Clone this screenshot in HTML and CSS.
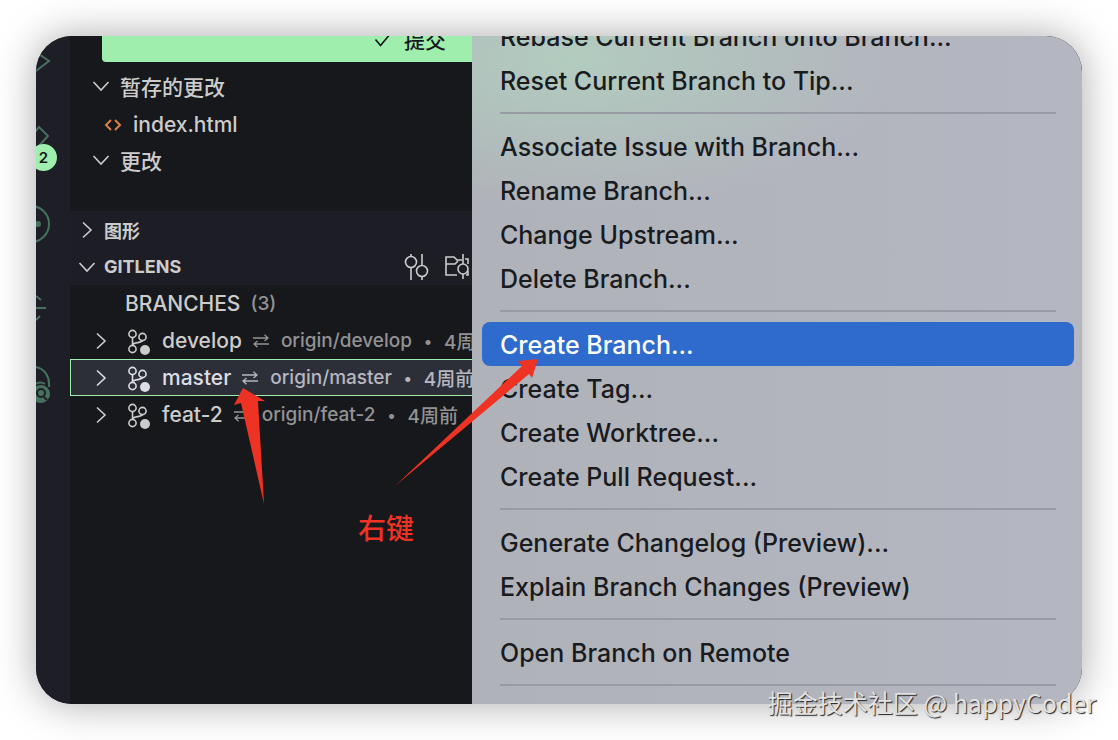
FILE: index.html
```html
<!doctype html>
<html lang="zh-CN">
<head>
  <meta charset="utf-8">
  <title>GitLens</title>
  <meta name="viewport" content="width=device-width, initial-scale=1">
  <link rel="stylesheet" href="styles.css">
</head>
<body>
  <svg class="symbols" aria-hidden="true">
    <symbol id="chevron-right" viewBox="0 0 18 18"><path d="M5 1.5l8 7.5-8 7.5"/></symbol>
    <symbol id="chevron-down" viewBox="0 0 18 18"><path d="M1.5 5L9 13l7.500-8"/></symbol>
    <symbol id="branch" viewBox="0 0 24 26">
      <circle cx="5.500" cy="5" r="3.600"/>
      <circle cx="5.500" cy="20" r="3.600"/>
      <circle cx="15.500" cy="8" r="3.600"/>
      <path d="M5.500 8.600v7.800M15.500 11.600c-1 3-9 1-10 4.500"/>
      <circle class="dot" cx="18" cy="21" r="5"/>
    </symbol>
    <symbol id="sync" viewBox="0 0 18 14"><path d="M1 4h15M12.500 .8L16 4l-3.500 3M17 10H2M5.500 7L2 10l3.500 3.200"/></symbol>
  </svg>

  <div class="window">
    <nav class="activity-bar">
      <button class="activity" aria-label="Run">
        <svg viewBox="0 0 34 83"><path d="M0 34l13 9L0 53"/></svg>
      </button>
      <button class="activity" aria-label="Source control">
        <svg viewBox="0 0 34 83"><path d="M-4 35l7-9 9 9-12 13"/></svg>
        <span class="badge">2</span>
      </button>
      <button class="activity" aria-label="GitLens">
        <svg viewBox="0 0 34 83"><circle cx="-5" cy="40" r="18"/><circle class="dot" cx="2" cy="40" r="3"/></svg>
      </button>
      <button class="activity" aria-label="Graph">
        <svg viewBox="0 0 34 83"><path d="M0 29l5 4M0 41h10M0 53l4-4"/></svg>
      </button>
      <button class="activity" aria-label="Inspect">
        <svg viewBox="0 0 34 83">
          <path d="M0 17c9 2 14 10 13 20M0 34c3-2 6-2 9 0"/>
          <circle class="dot" cx="5" cy="44" r="9"/>
          <path class="lens" d="M8 47l3 3M9 43a4 4 0 1 1-8 0 4 4 0 0 1 8 0z"/>
        </svg>
      </button>
    </nav>

    <aside class="sidebar">
      <div class="changes">
        <button class="commit">
          <svg viewBox="0 0 18 18"><path d="M1.500 9.500l5 6L17 3"/></svg>
          提交
        </button>
        <button class="row group"><svg class="chevron"><use href="#chevron-down"/></svg>暂存的更改</button>
        <button class="row file">
          <svg viewBox="0 0 18 14"><path d="M7 2L2 7l5 5M11 2l5 5-5 5"/></svg>
          index.html
        </button>
        <button class="row group"><svg class="chevron"><use href="#chevron-down"/></svg>更改</button>
      </div>

      <button class="row section"><svg class="chevron"><use href="#chevron-right"/></svg>图形</button>
      <div class="section-head">
        <button class="row section"><svg class="chevron"><use href="#chevron-down"/></svg>GITLENS</button>
        <button class="tool" aria-label="Commits">
          <svg viewBox="0 0 26 28"><path d="M7 1v2M7 15v12M18 1v11M18 24v3"/><circle cx="7" cy="9" r="5.500"/><circle cx="18" cy="18" r="5.500"/></svg>
        </button>
        <button class="tool" aria-label="Repositories">
          <svg viewBox="0 0 26 28"><path d="M13 22H2V4h8l3 3h5M2 11h9l3-3M19 1v10M19 21v5M21 6h3v5M24 18v4h-2"/><circle cx="19" cy="16" r="5"/></svg>
        </button>
      </div>

      <div class="branches">
        <div class="row branches-title">BRANCHES <span class="muted">(3)</span></div>
        <button class="row branch">
          <svg class="chevron"><use href="#chevron-right"/></svg>
          <svg class="branch-icon"><use href="#branch"/></svg>
          <span class="name">develop</span>
          <span class="muted"><svg class="sync"><use href="#sync"/></svg>origin/develop<i>•</i>4周前</span>
        </button>
        <button class="row branch selected">
          <svg class="chevron"><use href="#chevron-right"/></svg>
          <svg class="branch-icon"><use href="#branch"/></svg>
          <span class="name">master</span>
          <span class="muted"><svg class="sync"><use href="#sync"/></svg>origin/master<i>•</i>4周前</span>
        </button>
        <button class="row branch">
          <svg class="chevron"><use href="#chevron-right"/></svg>
          <svg class="branch-icon"><use href="#branch"/></svg>
          <span class="name">feat-2</span>
          <span class="muted"><svg class="sync"><use href="#sync"/></svg>origin/feat-2<i>•</i>4周前</span>
        </button>
      </div>
    </aside>

    <div class="menu" role="menu">
      <button role="menuitem">Rebase Current Branch onto Branch...</button>
      <button role="menuitem">Reset Current Branch to Tip...</button>
      <hr>
      <button role="menuitem">Associate Issue with Branch...</button>
      <button role="menuitem">Rename Branch...</button>
      <button role="menuitem">Change Upstream...</button>
      <button role="menuitem">Delete Branch...</button>
      <hr>
      <button role="menuitem" class="active">Create Branch...</button>
      <button role="menuitem">Create Tag...</button>
      <button role="menuitem">Create Worktree...</button>
      <button role="menuitem">Create Pull Request...</button>
      <hr>
      <button role="menuitem">Generate Changelog (Preview)...</button>
      <button role="menuitem">Explain Branch Changes (Preview)</button>
      <hr>
      <button role="menuitem">Open Branch on Remote</button>
      <hr>
    </div>

    <!-- annotations over the window -->
    <svg class="arrows" viewBox="0 0 320 160" aria-hidden="true">
      <path d="M13 33L4 50l7-2 23 101L28 46l7 0z"/>
      <path d="M308 4l-20 2 4 5L165 131l134-112 3 4z"/>
    </svg>
    <span class="note">右键</span>
  </div>

  <div class="watermark">掘金技术社区 @ happyCoder</div>
</body>
</html>
```

FILE: styles.css
```css
* {
  box-sizing: border-box;
}
body {
  margin: 0;
  height: 100vh;
  padding: 36px;
  overflow: hidden;
  background: #fff;
  color: #ccc;
  font-family: Inter, "Noto Sans CJK SC", sans-serif;
  font-size: 21px;
  font-weight: 500;
}
button {
  margin: 0;
  padding: 0;
  border: 0;
  background: none;
  color: inherit;
  font: inherit;
  text-align: left;
  white-space: nowrap;
}
svg {
  flex: none;
  fill: none;
  stroke: currentColor;
  stroke-width: 1.6;
}
.symbols {
  position: absolute;
  width: 0;
  height: 0;
}
.dot {
  fill: currentColor;
  stroke: none;
}

.window {
  position: relative;
  display: flex;
  height: 100%;
  overflow: hidden;
  border-radius: 36px;
  background: #17181b;
  box-shadow: 0 0 40px rgba(0, 0, 0, 0.34);
}

/* activity bar */
.activity-bar {
  flex: 0 0 34px;
  margin-top: -18px;
  background: #1e1e27;
  color: #47705f;
}
.activity {
  position: relative;
  display: block;
  width: 100%;
  height: 83px;
}
.activity svg {
  display: block;
  width: 34px;
  height: 83px;
  stroke-width: 2;
}
.activity .lens {
  stroke: #1e1e27;
}
.badge {
  position: absolute;
  top: 43px;
  left: -6px;
  width: 27px;
  height: 27px;
  border-radius: 50%;
  background: #9feeae;
  color: #17181b;
  font-size: 15px;
  font-weight: 600;
  line-height: 27px;
  text-align: center;
}

/* sidebar */
.sidebar {
  flex: 0 0 402px;
  overflow: hidden;
  background: #1d1e25;
}
.row {
  display: flex;
  align-items: center;
  width: 100%;
  height: 37px;
}
.chevron {
  width: 18px;
  height: 18px;
}
.changes {
  display: flow-root;
  height: 175px;
  background: #17181b;
}
.commit {
  display: flex;
  align-items: center;
  justify-content: center;
  gap: 12px;
  width: calc(100% - 32px);
  height: 42px;
  margin: -16px 0 7px 32px;
  padding: 0 0 4px 246px;
  border-radius: 4px 0 0 4px;
  background: #9feeae;
  color: #17181b;
}
.commit svg {
  width: 18px;
  height: 18px;
}
.group {
  gap: 10px;
  padding: 0 0 4px 22px;
}
.file {
  gap: 11px;
  padding-left: 34px;
}
.file svg {
  width: 18px;
  height: 14px;
  color: #d9804f;
  stroke-width: 2;
}
.section {
  gap: 8px;
  padding-left: 8px;
  font-size: 18px;
  font-weight: 700;
}
.section-head {
  display: flex;
  align-items: center;
}
.tool {
  flex: none;
  height: 28px;
  margin-right: 14px;
}
.tool:last-child {
  margin-right: 2px;
}
.tool svg {
  display: block;
  width: 26px;
  height: 28px;
}

.branches {
  height: 100%;
  background: #17181b;
}
.branches-title {
  gap: 10px;
  padding-left: 55px;
}
.branch {
  padding-left: 22px;
}
.branch-icon {
  width: 24px;
  height: 26px;
  margin: 2px 11px 0 17px;
}
.muted {
  display: flex;
  align-items: center;
  color: #929295;
  font-size: 19px;
}
.muted i {
  width: 32px;
  font-style: normal;
  font-size: 16px;
  text-align: center;
}
.sync {
  width: 18px;
  height: 14px;
  margin: 0 11px 0 10px;
  stroke-width: 1.3;
}
.selected {
  border: solid #9feeae;
  border-width: 1px 0 1px 1px;
  padding-left: 21px;
  background: #2d2f38;
  color: #dcdde6;
}
.selected .muted {
  color: #b6b7c0;
}

/* context menu */
.menu {
  flex: 1;
  min-width: 0;
  margin-top: -22px;
  padding: 0 8px 0 10px;
  background:
    radial-gradient(ellipse 330px 150px at 100px 45px, #b2ccbf, rgba(178, 204, 191, 0)),
    linear-gradient(90deg, #b0b2b9, #b4b7c1);
  color: #191b1e;
  font-size: 25px;
}
.menu button {
  display: block;
  width: 100%;
  height: 44px;
  padding: 2px 18px 0;
  border-radius: 8px;
}
.menu hr {
  height: 2px;
  margin: 10px 18px;
  border: 0;
  background: #999ba4;
}
.menu .active {
  background: #2e6bcc;
  color: #fff;
}

/* annotations */
.arrows {
  position: absolute;
  top: 319px;
  left: 194px;
  width: 320px;
  height: 160px;
  fill: #ee3324;
  stroke: none;
}
.note {
  position: absolute;
  top: 473px;
  left: 322px;
  color: #ee3324;
  font-size: 28px;
  line-height: 40px;
}
.watermark {
  position: absolute;
  right: 22px;
  bottom: 20px;
  color: #e2e2e2;
  font-family: "Noto Sans CJK SC", sans-serif;
  font-size: 25px;
  font-weight: 400;
  line-height: 36px;
  text-shadow: 1px 1px 1px #222;
}
```
